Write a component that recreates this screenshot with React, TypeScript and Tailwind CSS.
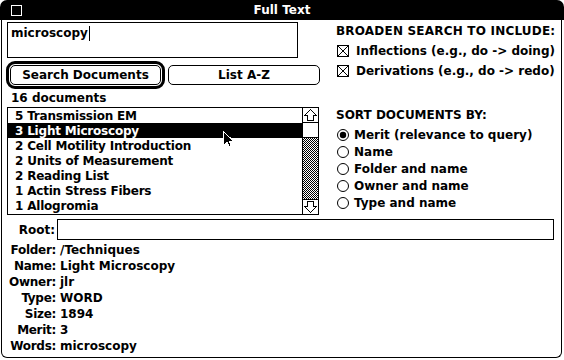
import React from "react";

const items = [
  "5 Transmission EM",
  "3 Light Microscopy",
  "2 Cell Motility Introduction",
  "2 Units of Measurement",
  "2 Reading List",
  "1 Actin Stress Fibers",
  "1 Allogromia",
];

const info: [string, string][] = [
  ["Folder:", "/Techniques"],
  ["Name:", "Light Microscopy"],
  ["Owner:", "jlr"],
  ["Type:", "WORD"],
  ["Size:", "1894"],
  ["Merit:", "3"],
  ["Words:", "microscopy"],
];

const sorts = ["Merit (relevance to query)", "Name", "Folder and name", "Owner and name", "Type and name"];

function CheckX() {
  return (
    <svg width="12" height="12" viewBox="0 0 12 12" shapeRendering="crispEdges" className="shrink-0">
      <rect x="0.5" y="0.5" width="11" height="11" fill="white" stroke="black" />
      <path d="M1 1 L11 11 M11 1 L1 11" stroke="black" strokeWidth="1" fill="none" />
    </svg>
  );
}

function Radio({ on }: { on?: boolean }) {
  return (
    <svg width="12" height="12" viewBox="0 0 12 12" className="shrink-0">
      <circle cx="6" cy="6" r="5.5" fill="white" stroke="black" strokeWidth="1" />
      {on && <circle cx="6" cy="6" r="3.2" fill="black" />}
    </svg>
  );
}

function Arrow({ down }: { down?: boolean }) {
  return (
    <svg width="15" height="14" viewBox="0 0 15 14" shapeRendering="crispEdges" className={down ? "rotate-180" : ""}>
      <polygon points="7.5,1.5 13.5,7.5 10.5,7.5 10.5,12.5 4.5,12.5 4.5,7.5 1.5,7.5" fill="white" stroke="black" strokeWidth="1" />
    </svg>
  );
}

export default function App() {
  return (
    <div className="w-[564px] h-[360px] bg-white relative font-['DejaVu_Sans',sans-serif] text-[12px] font-bold text-black leading-none overflow-hidden">
      {/* title bar */}
      <div className="h-[20px] bg-black rounded-t-[7px] flex items-center pl-[11px] pr-[11px]">
        <div className="w-[11px] h-[11px] border border-white" />
        <div className="flex-1 text-center text-white">Full Text</div>
        <div className="w-[11px]" />
      </div>
      {/* body */}
      <div className="ml-[1px] w-[561px] h-[338px] border-x border-b border-black rounded-b-[6px] pl-[5px]">
        <div className="flex">
          {/* left column */}
          <div className="w-[313px] flex flex-col">
            <div className="mt-[2px] w-[291px] h-[36px] border border-black pl-[3px] pt-[4px] flex items-start">
              <span>microscopy</span>
              <span className="inline-block w-px h-[15px] bg-black ml-px -mt-[1px]" />
            </div>
            <div className="mt-[3px] h-[28px] flex items-center">
              <div className="-ml-px w-[159px] h-[28px] border-[3px] border-black rounded-[9px] p-px">
                <div className="h-full border border-black rounded-[5px] flex items-center justify-center">Search Documents</div>
              </div>
              <div className="ml-[3px] w-[152px] h-[20px] border border-black rounded-[5px] flex items-center justify-center">List A-Z</div>
            </div>
            <div className="h-[18px] pl-[4px] flex items-center">16 documents</div>
            <div className="w-[312px] h-[108px] border border-black flex">
              <div className="flex-1 flex flex-col">
                {items.map((t, i) => (
                  <div
                    key={t}
                    className={
                      "h-[15px] pl-[7px] flex items-center whitespace-nowrap tracking-[-0.2px] " +
                      (i === 1 ? "bg-black text-white" : "")
                    }
                  >
                    {t}
                  </div>
                ))}
              </div>
              <div className="w-[16px] border-l border-black flex flex-col">
                <div className="h-[15px] border-b border-black flex items-center justify-center">
                  <Arrow />
                </div>
                <div className="h-[15px] border-b border-black bg-white" />
                <div className="flex-1 bg-[repeating-conic-gradient(#000_0%_25%,#fff_0%_50%)] bg-[length:2px_2px]" />
                <div className="h-[15px] border-t border-black flex items-center justify-center">
                  <Arrow down />
                </div>
              </div>
            </div>
          </div>
          {/* right column */}
          <div className="ml-[16px] flex flex-col">
            <div className="mt-[3px] h-[16px] flex items-center tracking-[0.2px]">BROADEN SEARCH TO INCLUDE:</div>
            <div className="mt-[2px] h-[20px] flex items-center gap-[7px] pl-px whitespace-nowrap">
              <CheckX />
              <span>Inflections (e.g., do -&gt; doing)</span>
            </div>
            <div className="h-[20px] flex items-center gap-[7px] pl-px whitespace-nowrap">
              <CheckX />
              <span>Derivations (e.g., do -&gt; redo)</span>
            </div>
            <div className="mt-[26px] h-[16px] flex items-center">SORT DOCUMENTS BY:</div>
            <div className="mt-[3px] flex flex-col">
              {sorts.map((s, i) => (
                <div key={s} className="h-[17px] flex items-center gap-[5px] pl-px whitespace-nowrap">
                  <Radio on={i === 0} />
                  <span>{s}</span>
                </div>
              ))}
            </div>
          </div>
        </div>
        {/* root row */}
        <div className="mt-[4px] h-[21px] flex items-center">
          <div className="w-[48px] text-right">Root:</div>
          <div className="ml-[2px] w-[497px] h-[21px] border border-black" />
        </div>
        {/* info */}
        <div className="mt-[2px] flex flex-col">
          {info.map(([k, v]) => (
            <div key={k} className="h-[16px] flex items-center whitespace-nowrap">
              <div className="w-[49px] text-right tracking-[-0.3px]">{k}</div>
              <div className="ml-[4px]">{v}</div>
            </div>
          ))}
        </div>
      </div>
      {/* mouse pointer */}
      <svg className="absolute left-[223px] top-[131px]" width="12" height="18" viewBox="0 0 12 18" shapeRendering="crispEdges">
        <polygon points="0.5,0.5 0.5,14.5 4,11 6.5,16.5 8.5,15.5 6,10 10.5,10" fill="black" stroke="white" strokeWidth="1" />
      </svg>
    </div>
  );
}
